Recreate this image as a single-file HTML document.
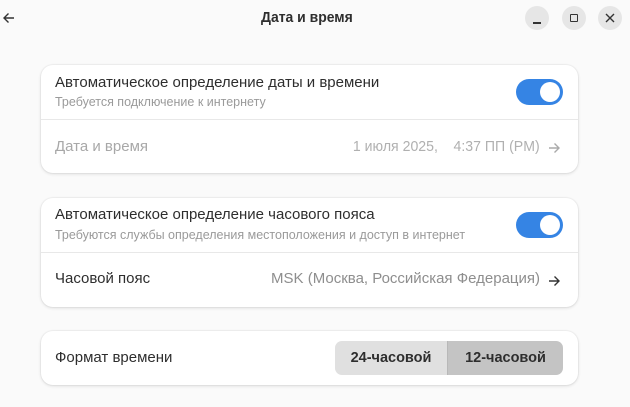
<!DOCTYPE html>
<html><head><meta charset="utf-8"><style>
*{margin:0;padding:0;box-sizing:border-box}
body{width:630px;height:407px;background:#fafafa;font-family:"Liberation Sans",sans-serif;color:#2e2e2e;position:relative;overflow:hidden}
.abs{position:absolute}
.card{position:absolute;left:41px;width:537px;background:#fff;border-radius:12px;box-shadow:0 1px 3px rgba(0,0,0,.12),0 0 0 1px rgba(0,0,0,.03)}
.t{position:absolute;white-space:nowrap;transform-origin:left center}
.r{transform-origin:right center}
.div{position:absolute;left:0;right:0;height:1px;background:#e8e8e8}
.tog{position:absolute;left:475px;width:47px;height:26px;border-radius:13px;background:#3584e4}
.tog:after{content:"";position:absolute;right:3px;top:3px;width:20px;height:20px;border-radius:50%;background:#fff}
.circ{position:absolute;top:6px;width:24px;height:24px;border-radius:50%;background:#e6e6e6}
</style></head><body>
<svg class="abs" style="left:2px;top:11px" width="14" height="14" viewBox="0 0 14 14"><path d="M12 7H2M6.5 2.5L2 7l4.5 4.5" stroke="#333" stroke-width="1.4" fill="none"/></svg>
<div class="t" style="left:261px;top:9px;font-size:15px;font-weight:bold;transform:scaleX(.93)">Дата и время</div>
<div class="circ" style="left:525px"></div><div class="abs" style="left:533px;top:22px;width:8px;height:1.5px;background:#333"></div>
<div class="circ" style="left:562px"></div><div class="abs" style="left:570px;top:14px;width:8px;height:8px;border:1.4px solid #333;border-radius:1px"></div>
<div class="circ" style="left:598px"></div><svg class="abs" style="left:605px;top:13px" width="10" height="10"><path d="M1 1L9 9M9 1L1 9" stroke="#333" stroke-width="1.4"/></svg>

<div class="card" style="top:65px;height:108px">
<div class="t" style="left:14px;top:9px;font-size:15px">Автоматическое определение даты и времени</div>
<div class="t" style="left:14px;top:30px;font-size:12.5px;color:#9a9a9a">Требуется подключение к интернету</div>
<div class="tog" style="top:14px"></div>
<div class="div" style="top:54px"></div>
<div class="t" style="left:14px;top:73px;font-size:15px;color:#a8a8a8">Дата и время</div>
<div class="t r" style="right:38px;top:73px;font-size:15px;color:#b0b0b0;transform:scaleX(.94)">1 июля 2025,&nbsp;&nbsp;&nbsp; 4:37 ПП (PM)</div>
<svg class="abs" style="left:506px;top:76px" width="14" height="14" viewBox="0 0 14 14"><path d="M2 7h10M7.5 2.5L12 7l-4.5 4.5" stroke="#aaa" stroke-width="1.4" fill="none"/></svg>
</div>

<div class="card" style="top:198px;height:109px">
<div class="t" style="left:14px;top:8px;font-size:15px">Автоматическое определение часового пояса</div>
<div class="t" style="left:14px;top:30px;font-size:12.5px;color:#9a9a9a">Требуются службы определения местоположения и доступ в интернет</div>
<div class="tog" style="top:14px"></div>
<div class="div" style="top:54px"></div>
<div class="t" style="left:14px;top:72px;font-size:15px">Часовой пояс</div>
<div class="t r" style="right:38px;top:72px;font-size:15px;color:#8e8e8e">MSK (Москва, Российская Федерация)</div>
<svg class="abs" style="left:506px;top:76px" width="14" height="14" viewBox="0 0 14 14"><path d="M2 7h10M7.5 2.5L12 7l-4.5 4.5" stroke="#333" stroke-width="1.4" fill="none"/></svg>
</div>

<div class="card" style="top:331px;height:54px">
<div class="t" style="left:14px;top:18px;font-size:15px">Формат времени</div>
<div class="abs" style="left:294px;top:10px;width:112px;height:34px;background:#e0e0e0;border-radius:7px 0 0 7px;font-weight:bold;font-size:14.5px;text-align:center;line-height:34px">24-часовой</div>
<div class="abs" style="left:406px;top:10px;width:116px;height:34px;background:#c4c4c4;border-radius:0 7px 7px 0;border-left:1px solid #b8b8b8;font-weight:bold;font-size:14.5px;text-align:center;line-height:34px">12-часовой</div>
</div>
</body></html>
